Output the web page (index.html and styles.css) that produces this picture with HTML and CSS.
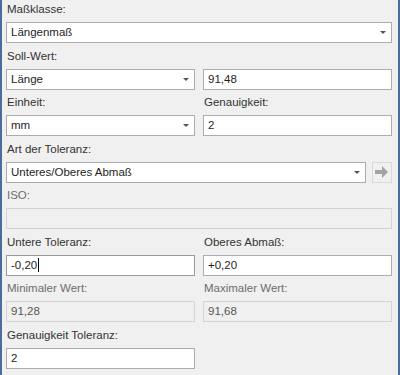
FILE: index.html
```html
<!DOCTYPE html>
<html lang="de">

<head>
    <meta charset="UTF-8">
    <meta name="viewport" content="width=device-width, initial-scale=1.0">
    <title>Maßklasse</title>

    <link rel="stylesheet" href="styles.css">
</head>

<body>
    <div class="panel">
        <div class="group">
            <div class="label">Maßklasse:</div>
            <div class="field combo">Längenmaß</div>
        </div>

        <div class="cols">
            <div class="group">
                <div class="label">Soll-Wert:</div>
                <div class="field combo">Länge</div>
            </div>
            <div class="group">
                <div class="label">&nbsp;</div>
                <div class="field">91,48</div>
            </div>
        </div>

        <div class="cols">
            <div class="group">
                <div class="label">Einheit:</div>
                <div class="field combo">mm</div>
            </div>
            <div class="group">
                <div class="label">Genauigkeit:</div>
                <div class="field">2</div>
            </div>
        </div>

        <div class="group">
            <div class="label">Art der Toleranz:</div>
            <div class="combo-row">
                <div class="field combo">Unteres/Oberes Abmaß</div>
                <button type="button" class="btn-go" disabled>
                    <svg width="14" height="12" viewBox="0 0 14 12">
                        <path d="M0 4 H7 V0 L13 6 L7 12 V8 H0 Z" fill="#a3a3a3" />
                    </svg>
                </button>
            </div>
        </div>

        <div class="group">
            <div class="label label-off">ISO:</div>
            <div class="field field-off"></div>
        </div>

        <div class="cols">
            <div class="group">
                <div class="label">Untere Toleranz:</div>
                <div class="field field-focus">-0,20<span class="caret"></span></div>
            </div>
            <div class="group">
                <div class="label">Oberes Abmaß:</div>
                <div class="field">+0,20</div>
            </div>
        </div>

        <div class="cols">
            <div class="group">
                <div class="label label-off">Minimaler Wert:</div>
                <div class="field field-off">91,28</div>
            </div>
            <div class="group">
                <div class="label label-off">Maximaler Wert:</div>
                <div class="field field-off">91,68</div>
            </div>
        </div>

        <div class="cols">
            <div class="group">
                <div class="label">Genauigkeit Toleranz:</div>
                <div class="field">2</div>
            </div>
        </div>
    </div>
</body>

</html>
```

FILE: styles.css
```css
/* 공통 */
* {
    box-sizing: border-box;
}

html,
body {
    margin: 0;
    padding: 0;
    height: 100%;
}

body {
    background: #f0f0f0;
    border-left: 2px solid #4d6c9b;
    border-right: 2px solid #4d6c9b;
    font-family: "Liberation Sans", Arial, sans-serif;
    font-size: 11.5px;
    color: #333;
    overflow: hidden;
}

button {
    display: block;
    background-color: transparent;
    border: 0;
    padding: 0;
}

/* 세부 */
.panel {
    padding: 1px 6px 0 4px;
}

.group {
    margin-bottom: 4.5px;
}

.cols {
    display: grid;
    grid-template-columns: 189px 189px;
    column-gap: 8px;
}

.label {
    height: 16px;
    line-height: 16px;
    margin-bottom: 5px;
    padding-left: 1px;
    white-space: nowrap;
}

.label-off {
    color: #6d6d6d;
}

.field {
    position: relative;
    height: 21px;
    line-height: 19px;
    padding: 0 4px;
    background: #fff;
    border: 1px solid #acacac;
    color: #1e1e1e;
    white-space: nowrap;
}

.field-off {
    background: #f0f0f0;
    border-color: #d4d4d4;
    color: #555;
}

.field-focus {
    border-color: #9a9a9a;
}

.caret {
    display: inline-block;
    width: 1px;
    height: 14px;
    margin-left: 1px;
    vertical-align: -3px;
    background: #000;
}

.combo::after {
    content: '';
    position: absolute;
    right: 5px;
    top: 8px;
    border-left: 3px solid transparent;
    border-right: 3px solid transparent;
    border-top: 3px solid #555;
}

.combo-row {
    display: flex;
    gap: 6px;
}

.combo-row .field {
    flex: 1;
}

.btn-go {
    display: flex;
    align-items: center;
    justify-content: center;
    width: 20px;
    height: 21px;
    border: 1px solid #dadada;
    background: #f0f0f0;
}
```
